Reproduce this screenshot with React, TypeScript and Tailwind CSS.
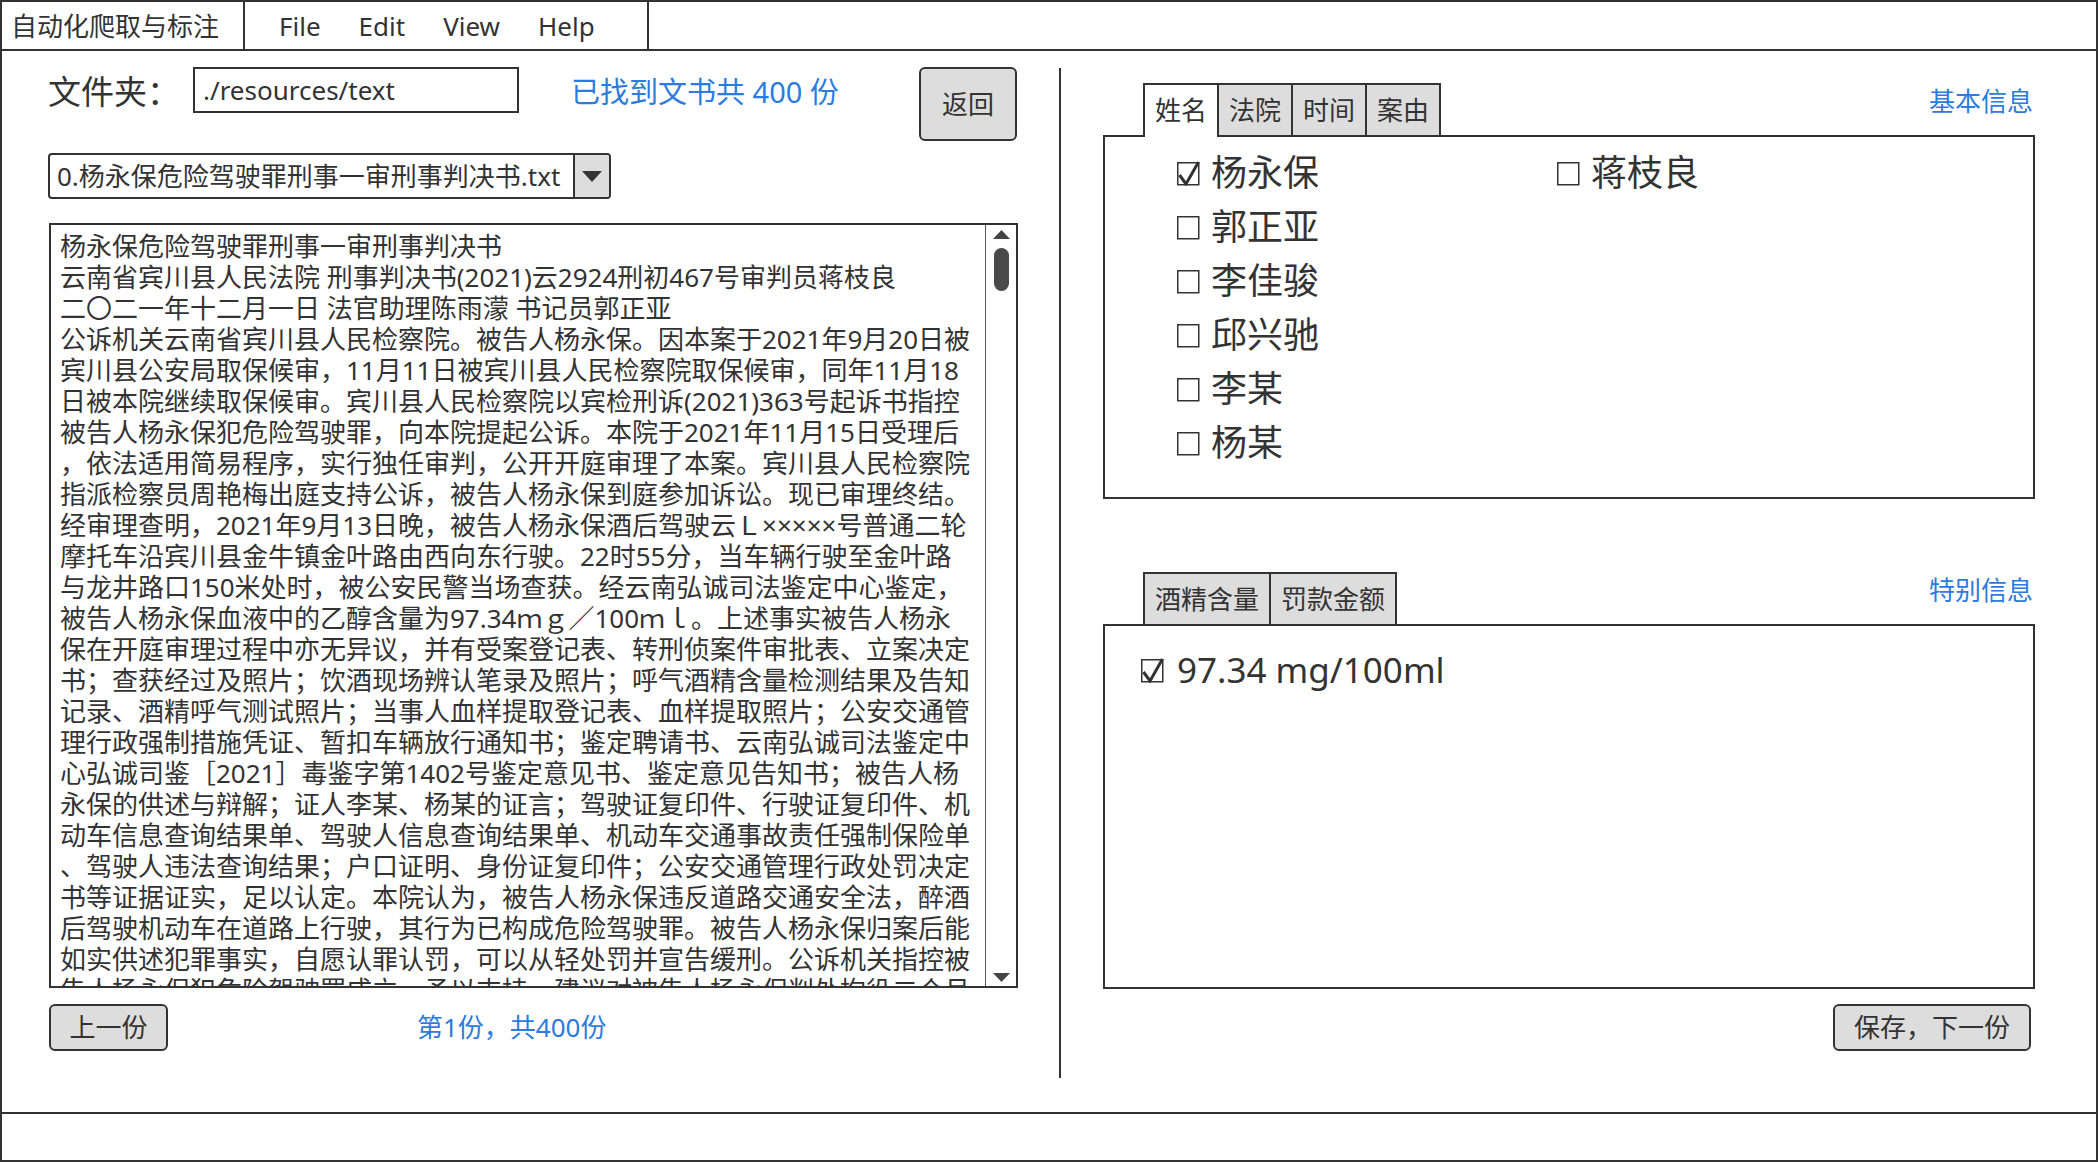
import React from "react";

const docLines = [
  "杨永保危险驾驶罪刑事一审刑事判决书",
  "云南省宾川县人民法院 刑事判决书(2021)云2924刑初467号审判员蒋枝良",
  "二〇二一年十二月一日 法官助理陈雨濛 书记员郭正亚",
  "公诉机关云南省宾川县人民检察院。被告人杨永保。因本案于2021年9月20日被",
  "宾川县公安局取保候审，11月11日被宾川县人民检察院取保候审，同年11月18",
  "日被本院继续取保候审。宾川县人民检察院以宾检刑诉(2021)363号起诉书指控",
  "被告人杨永保犯危险驾驶罪，向本院提起公诉。本院于2021年11月15日受理后",
  "，依法适用简易程序，实行独任审判，公开开庭审理了本案。宾川县人民检察院",
  "指派检察员周艳梅出庭支持公诉，被告人杨永保到庭参加诉讼。现已审理终结。",
  "经审理查明，2021年9月13日晚，被告人杨永保酒后驾驶云Ｌ×××××号普通二轮",
  "摩托车沿宾川县金牛镇金叶路由西向东行驶。22时55分，当车辆行驶至金叶路",
  "与龙井路口150米处时，被公安民警当场查获。经云南弘诚司法鉴定中心鉴定，",
  "被告人杨永保血液中的乙醇含量为97.34ｍｇ／100ｍｌ。上述事实被告人杨永",
  "保在开庭审理过程中亦无异议，并有受案登记表、转刑侦案件审批表、立案决定",
  "书；查获经过及照片；饮酒现场辨认笔录及照片；呼气酒精含量检测结果及告知",
  "记录、酒精呼气测试照片；当事人血样提取登记表、血样提取照片；公安交通管",
  "理行政强制措施凭证、暂扣车辆放行通知书；鉴定聘请书、云南弘诚司法鉴定中",
  "心弘诚司鉴［2021］毒鉴字第1402号鉴定意见书、鉴定意见告知书；被告人杨",
  "永保的供述与辩解；证人李某、杨某的证言；驾驶证复印件、行驶证复印件、机",
  "动车信息查询结果单、驾驶人信息查询结果单、机动车交通事故责任强制保险单",
  "、驾驶人违法查询结果；户口证明、身份证复印件；公安交通管理行政处罚决定",
  "书等证据证实，足以认定。本院认为，被告人杨永保违反道路交通安全法，醉酒",
  "后驾驶机动车在道路上行驶，其行为已构成危险驾驶罪。被告人杨永保归案后能",
  "如实供述犯罪事实，自愿认罪认罚，可以从轻处罚并宣告缓刑。公诉机关指控被",
  "告人杨永保犯危险驾驶罪成立，予以支持。建议对被告人杨永保判处拘役二个月",
];

const names = ["杨永保", "郭正亚", "李佳骏", "邱兴驰", "李某", "杨某"];

function CheckBox({ checked }: { checked?: boolean }) {
  return (
    <svg width="24" height="26" viewBox="0 0 24 26" className="shrink-0">
      <rect x="0.75" y="2.75" width="21" height="22" fill="white" stroke="#333" strokeWidth="1.5" />
      {checked ? (
        <path d="M2.5 15 L9 24 L21.5 2" fill="none" stroke="#333" strokeWidth="3" />
      ) : null}
    </svg>
  );
}

function Tab({ label, active, first, w }: { label: string; active?: boolean; first?: boolean; w: string }) {
  return (
    <div
      className={`${w} ${first ? "" : "-ml-[2px]"} flex items-center justify-center border-2 border-b-0 border-[#333] ${
        active ? "relative z-10 mb-[-2px] h-[54px] bg-white pb-[2px]" : "h-[52px] bg-[#ddd]"
      }`}
    >
      {label}
    </div>
  );
}

function Button({ label, w }: { label: string; w: string }) {
  return (
    <button
      type="button"
      className={`${w} flex h-[47px] items-center justify-center rounded-[6px] border-2 border-[#333] bg-[#ddd] text-[26px] text-[#333]`}
    >
      {label}
    </button>
  );
}

export default function App() {
  return (
    <div className="flex h-[1162px] w-[2098px] flex-col border-2 border-[#333] bg-white font-['Noto_Sans','Noto_Sans_CJK_SC',sans-serif] text-[#333]">
      {/* menu bar */}
      <div className="flex h-[49px] shrink-0 border-b-2 border-[#333] text-[26px]">
        <div className="flex w-[243px] items-center border-r-2 border-[#333] pl-[9px] pt-[2px]">
          自动化爬取与标注
        </div>
        <div className="flex w-[404px] items-center gap-[38px] border-r-2 border-[#333] pl-[34px] pt-[2px]">
          <span>File</span>
          <span>Edit</span>
          <span>View</span>
          <span>Help</span>
        </div>
      </div>

      {/* main */}
      <div className="flex h-[1061px] shrink-0">
        {/* left */}
        <div className="flex w-[1057px] flex-col pl-[46px] pt-[16px]">
          <div className="flex h-[74px]">
            <div className="flex h-[46px] w-[145px] items-center pt-[3px] text-[33px]">文件夹：</div>
            <div className="flex h-[46px] w-[326px] items-center border-2 border-[#333] pl-[8px] text-[26px]">
              ./resources/text
            </div>
            <div className="ml-[52px] flex h-[46px] w-[348px] items-center pt-[3px] text-[29px] text-[#2b7be0]">
              已找到文书共 400 份
            </div>
            <button
              type="button"
              className="flex h-[74px] w-[98px] items-center justify-center rounded-[6px] border-2 border-[#333] bg-[#ddd] text-[26px] text-[#333]"
            >
              返回
            </button>
          </div>

          <div className="mt-[12px] flex h-[46px] w-[563px] rounded-[4px] border-2 border-[#333]">
            <div className="flex flex-1 items-center pl-[7px] text-[26px]">
              0.杨永保危险驾驶罪刑事一审刑事判决书.txt
            </div>
            <div className="flex w-[36px] items-center justify-center rounded-r-[2px] border-l-2 border-[#333] bg-[#ddd]">
              <svg width="20" height="11" viewBox="0 0 20 11">
                <path d="M0 0 H20 L10 11 Z" fill="#333" />
              </svg>
            </div>
          </div>

          <div className="ml-[1px] mt-[24px] flex h-[765px] w-[969px] border-2 border-[#333]">
            <div className="flex-1 overflow-hidden pl-[9px] pt-[6px] text-[26px] leading-[31px]">
              {docLines.map((line, i) => (
                <div key={i} className="whitespace-pre">
                  {line}
                </div>
              ))}
            </div>
            <div className="flex w-[31px] flex-col items-center border-l border-[#555]">
              <svg width="17" height="9" viewBox="0 0 17 9" className="mt-[5px]">
                <path d="M0 9 H17 L8.5 0 Z" fill="#444" />
              </svg>
              <div className="mt-[9px] h-[43px] w-[15px] rounded-full bg-[#4a4a4a]" />
              <svg width="17" height="9" viewBox="0 0 17 9" className="mb-[4px] mt-auto">
                <path d="M0 0 H17 L8.5 9 Z" fill="#444" />
              </svg>
            </div>
          </div>

          <div className="ml-[1px] mt-[16px] flex items-center">
            <Button label="上一份" w="w-[119px]" />
            <span className="ml-[249px] text-[26px] text-[#2b7be0]">第1份，共400份</span>
          </div>
        </div>

        {/* divider */}
        <div className="mb-[34px] mt-[17px] w-[2px] bg-[#333]" />

        {/* right */}
        <div className="flex flex-1 flex-col pl-[42px] pt-[32px]">
          <div className="flex w-[932px] items-end text-[26px]">
            <div className="ml-[40px] flex items-end">
              <Tab label="姓名" active first w="w-[76px]" />
              <Tab label="法院" w="w-[76px]" />
              <Tab label="时间" w="w-[76px]" />
              <Tab label="案由" w="w-[76px]" />
            </div>
            <span className="mb-[16px] ml-auto pr-[2px] leading-[36px] text-[#2b7be0]">基本信息</span>
          </div>
          <div className="flex h-[364px] w-[932px] border-2 border-[#333] pl-[72px] pt-[9px] text-[36px]">
            <div className="w-[380px]">
              {names.map((n, i) => (
                <div key={n} className="flex h-[54px] items-center gap-[10px]">
                  <CheckBox checked={i === 0} />
                  <span>{n}</span>
                </div>
              ))}
            </div>
            <div>
              <div className="flex h-[54px] items-center gap-[10px]">
                <CheckBox />
                <span>蒋枝良</span>
              </div>
            </div>
          </div>

          <div className="mt-[73px] flex w-[932px] items-end text-[26px]">
            <div className="ml-[40px] flex items-end">
              <Tab label="酒精含量" first w="w-[128px]" />
              <Tab label="罚款金额" w="w-[128px]" />
            </div>
            <span className="mb-[16px] ml-auto pr-[2px] leading-[36px] text-[#2b7be0]">特别信息</span>
          </div>
          <div className="h-[365px] w-[932px] border-2 border-[#333] pl-[36px] pt-[17px]">
            <div className="flex h-[54px] items-center gap-[12px] text-[35px]">
              <CheckBox checked />
              <span>97.34 mg/100ml</span>
            </div>
          </div>

          <div className="mt-[15px] flex w-[932px] justify-end pr-[4px]">
            <Button label="保存，下一份" w="w-[198px]" />
          </div>
        </div>
      </div>

      {/* status bar */}
      <div className="flex-1 border-t-2 border-[#333]" />
    </div>
  );
}
